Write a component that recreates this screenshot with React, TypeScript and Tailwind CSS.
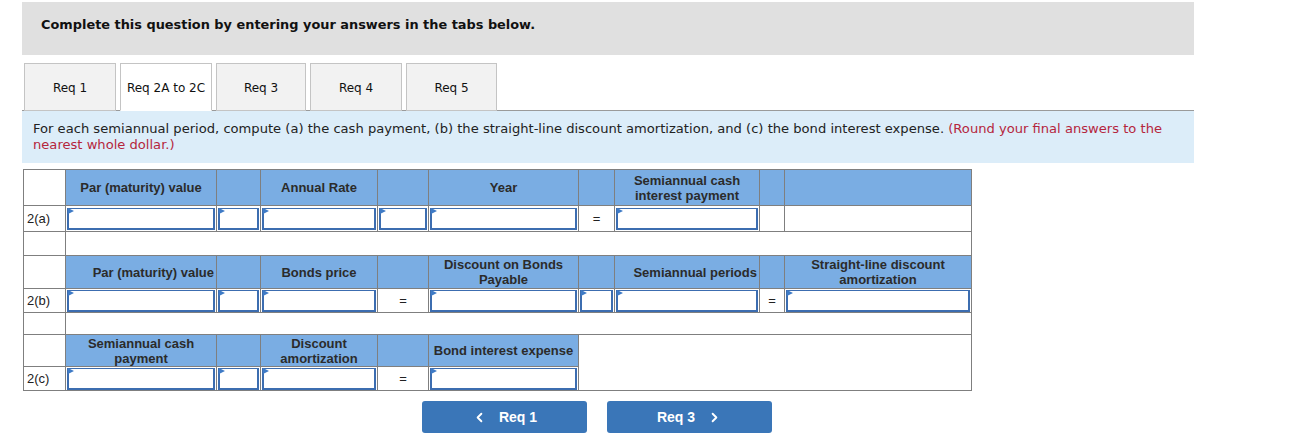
import { ChevronLeft, ChevronRight } from "lucide-react";

const tabs = [
    { label: "Req 1", w: "w-[92px]" },
    { label: "Req 2A to 2C", w: "w-[92px]" },
    { label: "Req 3", w: "w-[90px]" },
    { label: "Req 4", w: "w-[92px]" },
    { label: "Req 5", w: "w-[91px]" },
];

function Head({ children, align = "center" }: { children?: React.ReactNode; align?: "center" | "right" }) {
    return (
        <td
            className={`border border-[#7f7f7f] bg-[#7aade3] px-1 text-[13px] font-bold leading-[15px] text-[#2b2b2b] ${align === "right" ? "text-right pr-[2px]" : "text-center"}`}
        >
            {children}
        </td>
    );
}

function Inp() {
    return (
        <td className="border border-[#7f7f7f] p-0 align-middle">
            <div className="relative mx-px h-[22px] border-2 border-t-[1.5px] border-[#3c6db0] bg-white">
                <span className="absolute -left-px -top-px h-0 w-0 border-y-[3px] border-l-[6px] border-y-transparent border-l-[#3f7bc6]" />
            </div>
        </td>
    );
}

function Eq() {
    return <td className="border border-[#7f7f7f] text-center text-[13px] text-[#222]">=</td>;
}

function Empty({ span = 1, rows = 1 }: { span?: number; rows?: number }) {
    return <td colSpan={span} rowSpan={rows} className="border border-[#7f7f7f] bg-white" />;
}

function Label({ children }: { children?: React.ReactNode }) {
    return <td className="border border-[#7f7f7f] pl-[3px] text-[13px] text-[#222]">{children}</td>;
}

export default function App() {
    return (
        <div className="min-h-screen bg-white pt-[2px] font-['Liberation_Sans',Arial,sans-serif]">
            <div className="ml-[22px] w-[1172px]">
                {/* Top banner */}
                <div className="h-[53px] bg-[#e0e0e0] pl-[19px] pt-[13px] font-['DejaVu_Sans',Verdana,sans-serif] text-[12.9px] font-bold text-[#111]">
                    Complete this question by entering your answers in the tabs below.
                </div>

                {/* Tabs */}
                <div className="mt-[8px] flex items-end gap-[4px] border-b border-[#9a9a9a] pl-[2px]">
                    {tabs.map((t, i) => (
                        <div
                            key={t.label}
                            className={`-mb-px flex h-[48px] items-center justify-center border border-[#c4c4c4] pt-[2px] font-['DejaVu_Sans',Verdana,sans-serif] text-[12px] text-[#111] ${t.w} ${i === 1 ? "border-b-white bg-white" : "bg-[#f2f2f2]"}`}
                        >
                            {t.label}
                        </div>
                    ))}
                </div>

                {/* Instructions */}
                <div className="h-[52px] bg-[#dcedf9] pl-[11px] pt-[10px] font-['DejaVu_Sans',Verdana,sans-serif] text-[13.1px] leading-[16px] text-[#222]">
                    For each semiannual period, compute (a) the cash payment, (b) the straight-line discount amortization, and (c) the bond interest expense.{" "}
                    <span className="text-[#b5263d]">(Round your final answers to the nearest whole dollar.)</span>
                </div>

                {/* Worksheet */}
                <table className="ml-px mt-[6px] w-[948px] table-fixed border-collapse">
                    <colgroup>
                        <col className="w-[42px]" />
                        <col className="w-[151px]" />
                        <col className="w-[44px]" />
                        <col className="w-[117px]" />
                        <col className="w-[51px]" />
                        <col className="w-[150px]" />
                        <col className="w-[36px]" />
                        <col className="w-[145px]" />
                        <col className="w-[25px]" />
                        <col className="w-[187px]" />
                    </colgroup>
                    <tbody>
                        <tr className="h-[36px]">
                            <Label />
                            <Head>Par (maturity) value</Head>
                            <Head />
                            <Head>Annual Rate</Head>
                            <Head />
                            <Head>Year</Head>
                            <Head />
                            <Head>Semiannual cash interest payment</Head>
                            <Head />
                            <Head />
                        </tr>
                        <tr className="h-[26px]">
                            <Label>2(a)</Label>
                            <Inp />
                            <Inp />
                            <Inp />
                            <Inp />
                            <Inp />
                            <Eq />
                            <Inp />
                            <Empty />
                            <Empty />
                        </tr>
                        <tr className="h-[24px]">
                            <Label />
                            <Empty span={9} />
                        </tr>
                        <tr className="h-[33px]">
                            <Label />
                            <Head align="right">Par (maturity) value</Head>
                            <Head />
                            <Head>Bonds price</Head>
                            <Head />
                            <Head>Discount on Bonds Payable</Head>
                            <Head />
                            <Head align="right">Semiannual periods</Head>
                            <Head />
                            <Head>Straight-line discount amortization</Head>
                        </tr>
                        <tr className="h-[24px]">
                            <Label>2(b)</Label>
                            <Inp />
                            <Inp />
                            <Inp />
                            <Eq />
                            <Inp />
                            <Inp />
                            <Inp />
                            <Eq />
                            <Inp />
                        </tr>
                        <tr className="h-[22px]">
                            <Label />
                            <Empty span={9} />
                        </tr>
                        <tr className="h-[32px]">
                            <Label />
                            <Head>Semiannual cash payment</Head>
                            <Head />
                            <Head>Discount amortization</Head>
                            <Head />
                            <Head>Bond interest expense</Head>
                            <Empty span={4} rows={2} />
                        </tr>
                        <tr className="h-[24px]">
                            <Label>2(c)</Label>
                            <Inp />
                            <Inp />
                            <Inp />
                            <Eq />
                            <Inp />
                        </tr>
                    </tbody>
                </table>

                {/* Navigation */}
                <div className="mt-[10px] flex gap-[20px] pl-[400px]">
                    <button className="flex h-[32px] w-[165px] items-center justify-center gap-[12px] rounded-[3px] bg-[#3a76b8] text-[14px] font-bold text-white">
                        <ChevronLeft size={15} strokeWidth={3} />
                        <span>Req 1</span>
                    </button>
                    <button className="flex h-[32px] w-[165px] items-center justify-center gap-[12px] rounded-[3px] bg-[#3a76b8] text-[14px] font-bold text-white">
                        <span>Req 3</span>
                        <ChevronRight size={15} strokeWidth={3} />
                    </button>
                </div>
            </div>
        </div>
    );
}
